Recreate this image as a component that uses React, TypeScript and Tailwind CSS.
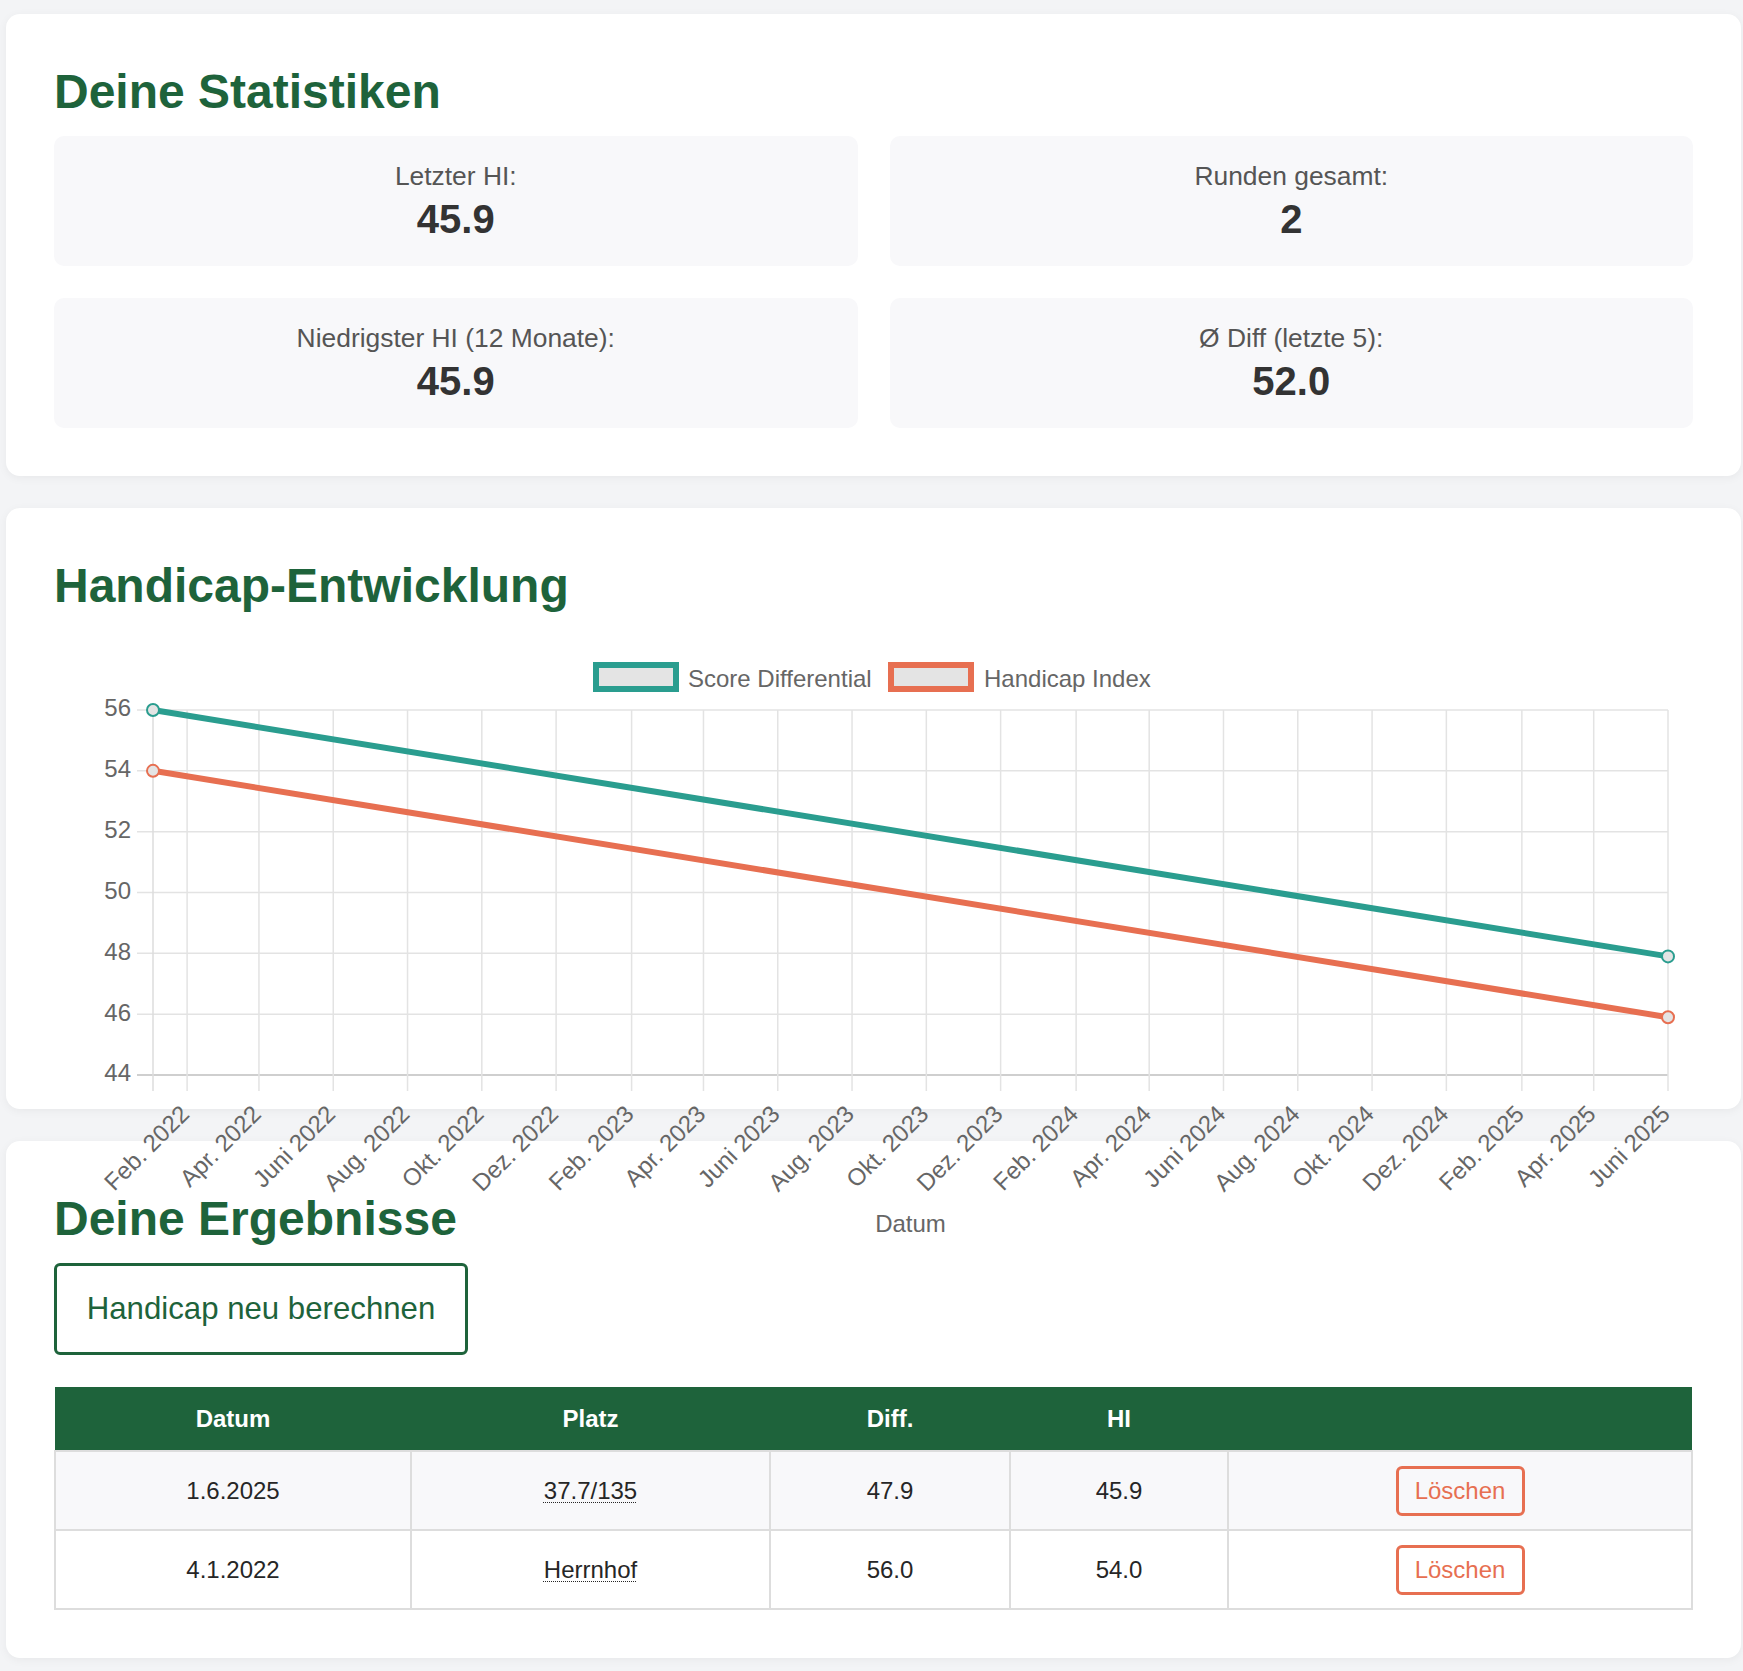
import React from 'react';

// Zeitachse des Diagramms (erster und letzter Eintrag)
const T0 = Date.UTC(2022, 0, 4);
const T1 = Date.UTC(2025, 5, 1);

// Plotbereich innerhalb des SVG
const PL = 99;
const PR = 1614;
const PT = 80;
const PB = 445;

const xOf = (t: number) => PL + ((t - T0) / (T1 - T0)) * (PR - PL);
const yOf = (v: number) => PT + ((56 - v) / 12) * (PB - PT);

const MONTHS = ['Jan.', 'Feb.', 'März', 'Apr.', 'Mai', 'Juni', 'Juli', 'Aug.', 'Sept.', 'Okt.', 'Nov.', 'Dez.'];

const xTicks: { t: number; label: string }[] = [];
for (let y = 2022; y <= 2025; y++) {
  for (const m of [1, 3, 5, 7, 9, 11]) {
    const t = Date.UTC(y, m, 1);
    if (t >= T0 && t <= T1) xTicks.push({ t, label: `${MONTHS[m]} ${y}` });
  }
}

const yTicks = [56, 54, 52, 50, 48, 46, 44];

const series = [
  { name: 'Score Differential', color: '#2a9d8f', from: 56.0, to: 47.9 },
  { name: 'Handicap Index', color: '#e76f51', from: 54.0, to: 45.9 },
];

const stats = [
  { label: 'Letzter HI:', value: '45.9' },
  { label: 'Runden gesamt:', value: '2' },
  { label: 'Niedrigster HI (12 Monate):', value: '45.9' },
  { label: 'Ø Diff (letzte 5):', value: '52.0' },
];

const rounds = [
  { date: '1.6.2025', course: '37.7/135', diff: '47.9', hi: '45.9' },
  { date: '4.1.2022', course: 'Herrnhof', diff: '56.0', hi: '54.0' },
];

const HandicapChart = () => {
  const font = { fontFamily: '"Liberation Sans", Arial, sans-serif', fontSize: 24 };
  return (
    <svg width={1639} height={620} viewBox="0 0 1639 620" className="block overflow-visible" style={font}>
      {/* Legende */}
      <rect x={542} y={35} width={80} height={24} fill="#e4e4e4" stroke="#2a9d8f" strokeWidth={6} />
      <text x={634} y={56.5} fill="#666">Score Differential</text>
      <rect x={837} y={35} width={80} height={24} fill="#e4e4e4" stroke="#e76f51" strokeWidth={6} />
      <text x={930} y={56.5} fill="#666">Handicap Index</text>

      {/* Horizontale Gitterlinien + Y-Beschriftung */}
      {yTicks.map((v) => (
        <g key={v}>
          <line x1={83} x2={PR} y1={yOf(v)} y2={yOf(v)} stroke={v === 44 ? '#cfcfcf' : '#e3e3e3'} strokeWidth={v === 44 ? 2 : 1.5} />
          <text x={77} y={yOf(v)} textAnchor="end" dominantBaseline="middle" fill="#666">
            {v}
          </text>
        </g>
      ))}

      {/* Vertikale Gitterlinien */}
      <line x1={PL} x2={PL} y1={PT} y2={PB + 16} stroke="#dcdcdc" strokeWidth={1.5} />
      {xTicks.map((tk) => (
        <line key={tk.t} x1={xOf(tk.t)} x2={xOf(tk.t)} y1={PT} y2={PB + 16} stroke="#e3e3e3" strokeWidth={1.5} />
      ))}

      {/* X-Beschriftung, 45° gedreht */}
      {xTicks.map((tk) => (
        <text
          key={tk.label}
          transform={`translate(${xOf(tk.t) - 1},${PB + 36}) rotate(-45)`}
          x={0}
          y={0}
          textAnchor="end"
          dominantBaseline="middle"
          fill="#666"
        >
          {tk.label}
        </text>
      ))}

      <text x={(PL + PR) / 2} y={602} textAnchor="middle" fill="#666">
        Datum
      </text>

      {/* Datenlinien */}
      {series.map((s) => (
        <g key={s.name}>
          <line
            x1={xOf(T0)}
            y1={yOf(s.from)}
            x2={xOf(T1)}
            y2={yOf(s.to)}
            stroke={s.color}
            strokeWidth={6}
          />
          <circle cx={xOf(T0)} cy={yOf(s.from)} r={6} fill="#e4e4e4" stroke={s.color} strokeWidth={2} />
          <circle cx={xOf(T1)} cy={yOf(s.to)} r={6} fill="#e4e4e4" stroke={s.color} strokeWidth={2} />
        </g>
      ))}
    </svg>
  );
};

export default function App() {
  return (
    <div className="min-h-screen bg-[#f3f4f6] pt-[14px] pb-[14px] pl-[6px] pr-[2px] font-['Liberation_Sans',Arial,sans-serif]">
      {/* Statistiken */}
      <section className="mb-8 rounded-[14px] bg-white p-12 shadow-[0_2px_10px_rgba(0,0,0,0.05)]">
        <h2 className="mb-[14px] text-[48px] font-bold leading-[60px] text-[#1e633b]">Deine Statistiken</h2>
        <div className="grid grid-cols-2 gap-8">
          {stats.map((s) => (
            <div key={s.label} className="h-[130px] rounded-[10px] bg-[#f8f8fa] py-6 text-center">
              <div className="text-[26.4px] leading-[32px] text-[#555]">{s.label}</div>
              <div className="mt-1 text-[40px] font-bold leading-[46px] text-[#333]">{s.value}</div>
            </div>
          ))}
        </div>
      </section>

      {/* Diagramm */}
      <section className="mb-8 rounded-[14px] bg-white p-12 shadow-[0_2px_10px_rgba(0,0,0,0.05)]">
        <h2 className="mb-[14px] text-[48px] font-bold leading-[60px] text-[#1e633b]">Handicap-Entwicklung</h2>
        <div className="relative z-10 h-[431px]">
          <HandicapChart />
        </div>
      </section>

      {/* Ergebnisse */}
      <section className="rounded-[14px] bg-white p-12 shadow-[0_2px_10px_rgba(0,0,0,0.05)]">
        <h2 className="mb-[14px] text-[48px] font-bold leading-[60px] text-[#1e633b]">Deine Ergebnisse</h2>
        <button className="h-[92px] w-[414px] rounded-md border-[3px] border-[#1e633b] bg-white text-[31.2px] text-[#1e633b]">
          Handicap neu berechnen
        </button>
        <table className="mt-8 w-full table-fixed border-collapse text-center text-[24px] text-[#262626]">
          <colgroup>
            <col className="w-[356px]" />
            <col className="w-[359px]" />
            <col className="w-[240px]" />
            <col className="w-[218px]" />
            <col />
          </colgroup>
          <thead>
            <tr className="h-[64px] bg-[#1e633b] text-white">
              <th className="font-bold">Datum</th>
              <th className="font-bold">Platz</th>
              <th className="font-bold">Diff.</th>
              <th className="font-bold">HI</th>
              <th />
            </tr>
          </thead>
          <tbody>
            {rounds.map((r, i) => (
              <tr key={r.date} className={`h-[79px] ${i % 2 === 0 ? 'bg-[#f8f8fa]' : 'bg-white'}`}>
                <td className="border-2 border-[#dddddd]">{r.date}</td>
                <td className="border-2 border-[#dddddd]">
                  <span className="underline decoration-dotted decoration-1 underline-offset-[3px]">{r.course}</span>
                </td>
                <td className="border-2 border-[#dddddd]">{r.diff}</td>
                <td className="border-2 border-[#dddddd]">{r.hi}</td>
                <td className="border-2 border-[#dddddd]">
                  <button className="h-[50px] w-[129px] rounded-md border-[3px] border-[#e76f51] text-[24px] text-[#e76f51]">
                    Löschen
                  </button>
                </td>
              </tr>
            ))}
          </tbody>
        </table>
      </section>
    </div>
  );
}
